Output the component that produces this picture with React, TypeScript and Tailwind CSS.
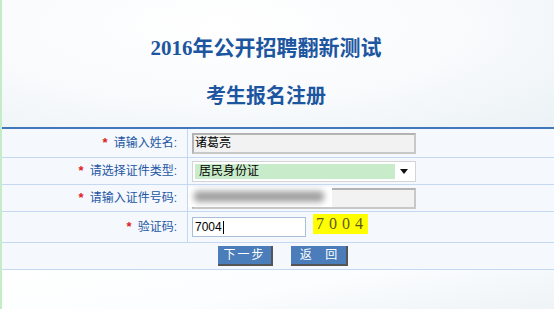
import React from "react";

const cjk = "font-['Liberation_Serif','Noto_Sans_CJK_SC',serif]";
const sans = "font-['Liberation_Sans','Noto_Sans_CJK_SC',sans-serif]";

function Label({ text }: { text: string }) {
  return (
    <div className={`flex items-center justify-end pr-[10px] text-[12px] text-[#2456a4] ${sans}`}>
      <span className="mr-[6px] text-[13px] font-bold text-[#e02020]">*</span>
      {text}
    </div>
  );
}

function Row({ h, label, children }: { h: string; label: string; children: React.ReactNode }) {
  return (
    <div className={`grid grid-cols-[186px_1fr] border-b border-[#c4d9f1] ${h}`}>
      <div className="flex justify-end border-r border-[#c4d9f1]">
        <Label text={label} />
      </div>
      <div className="flex items-center pl-[4px]">{children}</div>
    </div>
  );
}

export default function App() {
  return (
    <div className="relative flex h-[309px] w-[554px] flex-col overflow-hidden border-l-2 border-[#c4ecc6] bg-[linear-gradient(160deg,#fbfdfe_0%,#f6f9fb_40%,#edf3f6_100%)]">
      <div className="flex h-[127px] flex-col items-center pr-[24px] bg-[radial-gradient(ellipse_at_40%_20%,#ffffff_0%,#f8fafc_55%,#ebf2f5_100%)]">
        <h1 className={`mt-[37px] text-[21px] font-bold leading-[22px] text-[#1d56a0] ${cjk}`}>
          2016年公开招聘翻新测试
        </h1>
        <h2 className={`mt-[26px] text-[20px] font-bold leading-[22px] text-[#1d56a0] ${cjk}`}>
          考生报名注册
        </h2>
      </div>
      <div className="border-t-2 border-[#3f79bb] bg-[#f5f9fd]">
        <Row h="h-[29px]" label="请输入姓名:">
          <div className={`flex h-[21px] w-[224px] items-center border-2 border-[#b3b3b3] border-r-[#c8c8c8] border-b-[#c8c8c8] bg-[#f2f2f2] pl-[1px] text-[12px] text-black ${sans}`}>
            诸葛亮
          </div>
        </Row>
        <Row h="h-[27px]" label="请选择证件类型:">
          <div className={`flex h-[21px] w-[224px] items-center border border-[#d4d4d4] bg-white p-[2px] text-[12px] text-black ${sans}`}>
            <div className="flex h-full flex-1 items-center bg-[#c8ecc9] pl-[4px]">居民身份证</div>
            <div className="flex w-[18px] items-center justify-center">
              <svg width="8" height="5" viewBox="0 0 8 5">
                <path d="M0 0H8L4 5Z" fill="#111" />
              </svg>
            </div>
          </div>
        </Row>
        <Row h="h-[27px]" label="请输入证件号码:">
          <div className="relative flex h-[21px] w-[224px] items-center border-2 border-[#b3b3b3] border-r-[#c8c8c8] border-b-[#c8c8c8] bg-[#f2f2f2]">
            <div className="absolute left-[-6px] top-[-3px] h-[20px] w-[144px] bg-white">
              <div className="ml-[6px] mt-[4px] h-[11px] w-[130px] rounded-sm bg-[#a0a0a0] blur-[3px]" />
            </div>
          </div>
        </Row>
        <Row h="h-[31px]" label="验证码:">
          <div className="flex items-center gap-[7px]">
            <div className={`flex h-[20px] w-[114px] items-center border border-[#a9bfd6] bg-white pl-[2px] text-[12px] text-black ${sans}`}>
              7004<span className="ml-[1px] h-[13px] w-px bg-black" />
            </div>
            <div className="mb-[6px] flex h-[20px] w-[55px] items-center justify-center bg-[#ffff00] pl-[3px] font-['Liberation_Serif',serif] text-[16px] tracking-[5px] text-[#5e5a1e]">
              7004
            </div>
          </div>
        </Row>
        <div className="flex h-[27px] items-center justify-center gap-[18px] border-b border-[#c4d9f1] pl-[10px]">
          <button className={`h-[20px] w-[55px] border-r-2 border-b-2 border-[#555] bg-[#4a7dba] text-[12px] tracking-[2px] text-white ${sans}`}>
            下一步
          </button>
          <button className={`h-[20px] w-[57px] border-r-2 border-b-2 border-[#555] bg-[#4a7dba] text-[12px] text-white ${sans}`}>
            返&nbsp;&nbsp;&nbsp;&nbsp;回
          </button>
        </div>
      </div>
      <div className="flex-1 bg-[linear-gradient(170deg,#ffffff_0%,#fbfdfe_50%,#eef3f6_100%)]" />
    </div>
  );
}
